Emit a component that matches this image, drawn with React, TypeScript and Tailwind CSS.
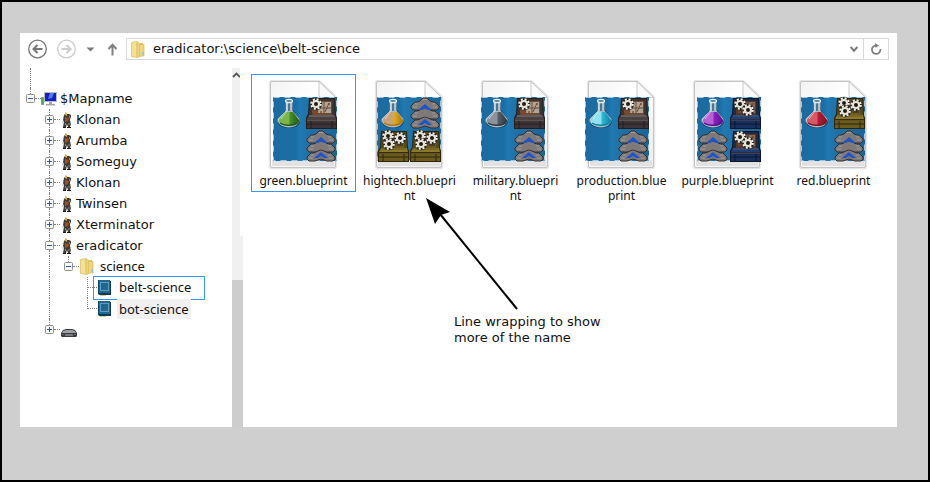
import type { ReactNode } from 'react';

type Machine = 'gray' | 'gold' | 'blue';
type Cell = 'belt' | Machine | null;

interface BlueprintFile {
  id: string;
  // name split at the points where it may wrap
  name: string[];
  flask: [string, string, string];
  // top right, bottom left, bottom right
  cells: [Cell, Cell, Cell];
  shift: number;
  selected?: boolean;
}

const files: BlueprintFile[] = [
  { id: 'green', name: ['green.blueprint'], flask: ['#7db648', '#468f28', '#245c18'], cells: ['gray', null, 'belt'], shift: 3, selected: true },
  { id: 'hightech', name: ['hightech.bluepri', 'nt'], flask: ['#c9a277', '#e0ae1d', '#a87410'], cells: ['belt', 'gold', 'gold'], shift: 1 },
  { id: 'military', name: ['military.bluepri', 'nt'], flask: ['#8b929c', '#56606a', '#30373f'], cells: ['gray', null, 'belt'], shift: -1 },
  { id: 'production', name: ['production.blue', 'print'], flask: ['#8fe2f0', '#2fb9d6', '#12809f'], cells: ['gray', null, 'belt'], shift: -3 },
  { id: 'purple', name: ['purple.blueprint'], flask: ['#b95fd8', '#8d1fc4', '#5c0f88'], cells: ['blue', 'belt', 'blue'], shift: 3 },
  { id: 'red', name: ['red.blueprint'], flask: ['#d95868', '#b81b34', '#7f1224'], cells: ['gold', null, 'belt'], shift: 1 },
];

const players = ['Klonan', 'Arumba', 'Someguy', 'Klonan', 'Twinsen', 'Xterminator'];

const machineColors = {
  gray: { rim: '#3d3431', top: '#6b4a38', plate: '#b0a594', side: '#4a4145', dark: '#241f20' },
  gold: { rim: '#5a4c12', top: '#6e5c1a', plate: '#4a3a26', side: '#8c7a26', dark: '#2e260c' },
  blue: { rim: '#1c2a45', top: '#4c3a30', plate: '#8a6a50', side: '#1e3f7c', dark: '#0e1628' },
};

function Gear({ x, y }: { x: number; y: number }) {
  return (
    <g transform={`translate(${x} ${y})`}>
      <circle r="4.8" fill="none" stroke="#2a2622" strokeWidth="3" />
      <circle r="4.8" fill="none" stroke="#f1efe6" strokeWidth="2" strokeDasharray="2 1.77" />
      <circle r="3" fill="none" stroke="#e6e3d8" strokeWidth="2.2" />
      <circle r="1.8" fill="#1d1a18" />
    </g>
  );
}

function MachineTile({ kind, x, y }: { kind: Machine; x: number; y: number }) {
  const c = machineColors[kind];
  return (
    <g transform={`translate(${x} ${y})`}>
      <path d="M3 1h26l1 17 1 3v11H0V21l2-4z" fill={c.dark} />
      <path d="M4 2h24l1 17H3z" fill={c.rim} />
      <path d="M6 4h20v14H6z" fill={c.top} />
      <path d="M13 5h12v11H12z" fill={c.plate} />
      <path d="M18 5v11M13 11h12M23 6l-4 9" stroke={c.top} />
      <path d="M8 15h3M14 15h2M22 7h2" stroke="#8f4a2a" strokeWidth="1.5" />
      <path d="M3 18h26l1 4H1z" fill={c.side} />
      <path d="M1 23h29v8H1z" fill={c.side} opacity=".65" />
      <path d="M3 19h25M1 23h29" stroke={c.plate} strokeWidth=".8" opacity=".7" />
      <path d="M1 27h29M5 24v7M26 24v7" stroke={c.dark} />
      {kind === 'gray' && <Gear x={10} y={7} />}
      {kind === 'gold' && (
        <>
          <Gear x={22} y={8} />
          <Gear x={10} y={6} />
          <Gear x={11} y={14} />
        </>
      )}
      {kind === 'blue' && (
        <>
          <Gear x={10} y={7} />
          <Gear x={18} y={13} />
        </>
      )}
    </g>
  );
}

function BeltTile({ x, y }: { x: number; y: number }) {
  return (
    <g transform={`translate(${x} ${y})`}>
      {[18, 9, 0].map((top) => (
        <g key={top} transform={`translate(0 ${top})`}>
          <path
            d="M13 1h4l3 3 3 1h2l4 4v2l-2 2h-6l-6-2-6 2H3l-2-2V9l4-4h2l3-1z"
            fill="#7f7a79"
            stroke="#353131"
          />
          <path d="M13 2.500h4M5 7h3M22 7h3M3 10h4M23 10h4" stroke="#a19c99" />
        </g>
      ))}
      <path d="M15 7l7 6h-4l-3-2-3 2H8zM15 22l7 6h-4l-3-2-3 2H8z" fill="#1f55cc" />
    </g>
  );
}

function Flask({ colors, id }: { colors: [string, string, string]; id: string }) {
  return (
    <g>
      <linearGradient id={id} x1="0" x2="1" y1="0" y2="0">
        <stop offset="0" stopColor={colors[0]} />
        <stop offset=".5" stopColor={colors[0]} />
        <stop offset=".55" stopColor={colors[1]} />
        <stop offset="1" stopColor={colors[2]} />
      </linearGradient>
      <path d="M12 3h7l1 11 7 9c1 5-5 8-11 8s-12-3-11-8l7-9z" fill="#123450" opacity=".75" />
      <path d="M13 4h6v10l7 8c1 5-5 8-10 8S4 27 5 22l8-8z" fill="#a9bcc5" stroke="#c9d9e0" strokeWidth=".7" />
      <path d="M12 15h8l6 8c1 4-5 6-10 6S5 27 6 23z" fill={`url(#${id})`} />
      <path d="M7 26c4 3 13 3 17 0" fill="none" stroke={colors[2]} strokeWidth="1.4" />
      <path d="M14 5v9l-6 8" fill="none" stroke="#fff" opacity=".5" />
      <path d="M15 5h2v9h-2z" fill="#52758b" />
      <ellipse cx="16" cy="4" rx="3.5" ry="1.7" fill="#5e8196" stroke="#e5eff3" strokeWidth="1.2" />
    </g>
  );
}

function BlueprintIcon({ file }: { file: BlueprintFile }) {
  const { id } = file;
  const spots = [[33, 0], [1, 33], [33, 33]];
  return (
    <svg width="75" height="90" viewBox="-4 -1 75 90" aria-hidden="true">
      <defs>
        <linearGradient id={`${id}-paper`} x1="0" x2="1" y1="0" y2="1">
          <stop offset="0" stopColor="#f3f3f3" />
          <stop offset=".4" stopColor="#ffffff" />
          <stop offset="1" stopColor="#ededed" />
        </linearGradient>
        <linearGradient id={`${id}-blue`} x1="0" x2="1" y1="0" y2="0">
          <stop offset="0" stopColor="#1b6ba1" />
          <stop offset=".36" stopColor="#1a6ea5" />
          <stop offset=".42" stopColor="#217ab2" />
          <stop offset=".55" stopColor="#1d72a9" />
          <stop offset="1" stopColor="#1a6599" />
        </linearGradient>
      </defs>
      <path d="M0 2q0-2 2-2h47l17 16v69q0 2-2 2H2q-2 0-2-2z" fill="none" stroke="#e6e6e6" strokeWidth="2.4" />
      <path d="M.5 2Q.5.5 2 .5h47l16.500 16V85q0 1.500-1.500 1.500H2Q.5 86.500.5 85z" fill={`url(#${id}-paper)`} stroke="#c4c4c4" />
      <path d="M2 82h62" stroke="#e2e2e2" strokeWidth="6" />
      <path d="M49 1l16 16-16-3z" fill="#cfcfcf" />
      <path d="M49 .5v14q0 2 2 2h14.500z" fill="#fafafa" stroke="#bdbdbd" strokeWidth=".8" />
      <g transform={`translate(${file.shift} 16)`}>
        <rect width="64" height="64" fill={`url(#${id}-blue)`} />
        <rect x=".5" y=".5" width="63" height="63" fill="none" stroke="#a5c6dc" strokeDasharray="6 5" />
        <Flask colors={file.flask} id={`${id}-flask`} />
        {file.cells.map((cell, i) => {
          const [x, y] = spots[i];
          if (cell === null) return null;
          if (cell === 'belt') return <BeltTile key={i} x={x} y={y} />;
          return <MachineTile key={i} kind={cell} x={x} y={y} />;
        })}
      </g>
    </svg>
  );
}

function FolderIcon() {
  return (
    <svg width="14" height="17" viewBox="0 0 14 17" className="shrink-0" aria-hidden="true">
      <path d="M4 2.500l8-.5v13l-8 1z" fill="#e3c258" />
      <path d="M8 3.500h5V15H8z" fill="#f0d67c" stroke="#d2b04a" strokeWidth=".6" />
      <path d="M.5 1.500L6 .5 8 2v14l-2 .5-5.500-1z" fill="#f5e196" stroke="#d9ba58" strokeWidth=".7" />
      <path d="M6 1v15" stroke="#d8b94f" />
      <path d="M12 11v3" stroke="#7fc4e8" strokeWidth="1.4" />
    </svg>
  );
}

function ComputerIcon() {
  return (
    <svg width="16" height="14" viewBox="0 0 16 14" className="shrink-0" aria-hidden="true">
      <path d="M0 5h3v8H0z" fill="#9a9e9a" />
      <path d="M.5 6h2v6h-2z" fill="#49b04a" />
      <path d="M3 0h13v10H3z" fill="#b9bcc4" />
      <path d="M4 1h11v8H4z" fill="#1420c4" />
      <path d="M9 1h4l-2 5-4 1z" fill="#4f7cf5" />
      <path d="M8 10h3v2h3v1.500H5V12h3z" fill="#a6a6a6" />
    </svg>
  );
}

function PlayerIcon() {
  return (
    <svg width="11" height="16" viewBox="0 0 11 16" className="shrink-0" aria-hidden="true">
      <path d="M4 2h4l2 1v2L9 7v3l1 2-1 3H7l-1-3-1 3H2l1-5-1-2 1-5z" fill="#3f3b39" />
      <path d="M4 5l4 1-1 3-3 1z" fill="#a0501c" />
      <path d="M4 0l2 1v3L4 3z" fill="#e8a83a" />
      <path d="M8.500 4v2M2.500 5v2M4.500 11v2M8 11v2" stroke="#8d8883" />
      <path d="M2 15.500h3M6 15.500h4" stroke="#1c1a19" />
      <path d="M9.500 9v2M2 9v2" stroke="#b5afa8" />
    </svg>
  );
}

function BookIcon() {
  return (
    <svg width="14" height="16" viewBox="0 0 14 16" className="shrink-0" aria-hidden="true">
      <path d="M1 1h13v14H2.500L1 14z" fill="#123a54" />
      <path d="M1 0h12v13H1z" fill="#1c6a94" />
      <path d="M3.500 2.500h8v8h-8z" fill="none" stroke="#a5cfe2" strokeDasharray="1 1" />
      <path d="M1.500 0v14" stroke="#0f4566" />
      <path d="M3 15.500h6" stroke="#d3c98c" />
    </svg>
  );
}

function HelmetIcon() {
  return (
    <svg width="16" height="9" viewBox="0 0 16 9" className="mt-2 shrink-0" aria-hidden="true">
      <path d="M0 4l2-3 3-1h6l3 1 2 3v3l-1 1H1L0 7z" fill="#3b3c3f" />
      <path d="M2 2l3-1h6l3 1 1 2H1z" fill="#9b9da0" />
      <path d="M4 6q0-1 1-1h6q1 0 1 1v1H4z" fill="#77797c" />
      <path d="M1 5.500h2M13 5.500h2" stroke="#5d5f63" />
    </svg>
  );
}

function Toggle({ open, above = true, below = true, label }: { open?: boolean; above?: boolean; below?: boolean; label: string }) {
  return (
    <div className="flex w-[9px] flex-col items-center self-stretch">
      <div className={above ? 'w-px flex-1 border-l border-dotted border-[#808080]' : 'flex-1'} />
      <button type="button" aria-label={label} aria-expanded={!!open} className="block size-[9px]">
        <svg width="9" height="9" viewBox="0 0 9 9">
          <rect x=".5" y=".5" width="8" height="8" rx="1" fill="#f6f6f6" stroke="#8f8f8f" />
          <path d={open ? 'M2 4.500h5' : 'M2 4.500h5M4.500 2v5'} stroke="#35569c" />
        </svg>
      </button>
      <div className={below ? 'w-px flex-1 border-l border-dotted border-[#808080]' : 'flex-1'} />
    </div>
  );
}

// Empty indent column, optionally with the parent's guide line running through it
function Rail({ line }: { line?: boolean }) {
  return (
    <div className="flex w-[19px] self-stretch pl-1">
      {line && <div className="border-l border-dotted border-[#808080]" />}
    </div>
  );
}

function Dash() {
  return <div className="mr-px w-1.5 border-t border-dotted border-[#808080]" />;
}

function Row({ children }: { children: ReactNode }) {
  return <li className="flex h-[21px] items-center whitespace-nowrap">{children}</li>;
}

function Tree() {
  return (
    <nav aria-label="Blueprint folders" className="w-[212px] shrink-0 pl-1.5 text-[13px]">
      <div className="ml-1 h-5 border-l border-dotted border-[#808080]" />
      <ul>
        <Row>
          <Toggle open below={false} label="Collapse $Mapname" />
          <div className="w-1.5 border-t border-dotted border-[#808080]" />
          <ComputerIcon />
          <a href="#map" className="ml-[3px]">$Mapname</a>
        </Row>
        {players.map((name, i) => (
          <Row key={i}>
            <Rail />
            <Toggle label={`Expand ${name}`} />
            <Dash />
            <PlayerIcon />
            <a href="#player" className="ml-1">{name}</a>
          </Row>
        ))}
        <Row>
          <Rail />
          <Toggle open label="Collapse eradicator" />
          <Dash />
          <PlayerIcon />
          <a href="#eradicator" className="ml-1">eradicator</a>
        </Row>
        <Row>
          <Rail />
          <Rail line />
          <Toggle open below={false} label="Collapse science" />
          <Dash />
          <FolderIcon />
          <a href="#science" className="ml-1.5 font-['Noto_Sans',sans-serif]">science</a>
        </Row>
        <Row>
          <Rail />
          <Rail line />
          <Rail />
          <div className="ml-1 w-1.5 self-stretch border-l border-dotted border-[#808080]">
            <div className="mt-2.5 border-t border-dotted border-[#808080]" />
          </div>
          <a href="#belt-science" aria-current="page" className="-my-1 flex h-6 w-28 items-center border border-[#3a96f5] font-['Noto_Sans',sans-serif]">
            <span className="w-[3px] border-t border-dotted border-[#808080]" />
            <BookIcon />
            <span className="ml-2">belt-science</span>
          </a>
        </Row>
        <Row>
          <Rail />
          <Rail line />
          <Rail />
          <div className="ml-1 h-[11px] w-2.5 self-start border-b border-l border-dotted border-[#808080]" />
          <a href="#bot-science" className="flex items-center font-['Noto_Sans',sans-serif]">
            <BookIcon />
            <span className="ml-1.5 bg-[#f0f0f0] px-0.5 leading-5">bot-science</span>
          </a>
        </Row>
        <Row>
          <Rail />
          <Toggle below={false} label="Expand unnamed player" />
          <Dash />
          <HelmetIcon />
        </Row>
      </ul>
    </nav>
  );
}

function Toolbar() {
  return (
    <header className="flex items-center pt-[5px] pr-2 pb-2 pl-2">
      <button type="button" aria-label="Back">
        <svg width="20" height="20" viewBox="0 0 20 20" fill="none" stroke="#757575">
          <circle cx="9.5" cy="10" r="8.8" strokeWidth="1.3" />
          <path d="M14.500 10H6M9.500 6l-4 4 4 4" strokeWidth="2" />
        </svg>
      </button>
      <button type="button" aria-label="Forward" className="ml-[9px]">
        <svg width="20" height="20" viewBox="0 0 20 20" fill="none" stroke="#cbcbcb">
          <circle cx="9.5" cy="10" r="8.8" strokeWidth="1.3" />
          <path d="M4.500 10H13M9.500 6l4 4-4 4" strokeWidth="2" />
        </svg>
      </button>
      <button type="button" aria-label="Recent locations" className="ml-[9px]">
        <svg width="9" height="5" viewBox="0 0 9 5">
          <path d="M.5.5h8l-4 4z" fill="#7a7a7a" />
        </svg>
      </button>
      <button type="button" aria-label="Up" className="mr-2 ml-3">
        <svg width="11" height="13" viewBox="0 0 11 13" fill="none" stroke="#808080" strokeWidth="2">
          <path d="M5.500 12.500V2M1.500 6l4-4.300 4 4.300" />
        </svg>
      </button>
      <div className="flex h-[22px] min-w-0 flex-1 items-center border border-[#d9d9d9] pl-1">
        <FolderIcon />
        <input
          aria-label="Address"
          defaultValue="eradicator:\science\belt-science"
          className="ml-2 min-w-0 flex-1 text-[13px] outline-none"
        />
        <button type="button" aria-label="Previous locations" className="px-[5px]">
          <svg width="8" height="7" viewBox="0 0 8 7" fill="none" stroke="#777" strokeWidth="2">
            <path d="M.7 1L4 4.800 7.300 1" />
          </svg>
        </button>
        <button type="button" aria-label="Refresh" className="flex w-[25px] justify-center self-stretch border-l border-[#d9d9d9] pt-1">
          <svg width="12" height="12" viewBox="0 0 12 12" fill="none">
            <path d="M6 2.500a4.200 4.200 0 1 0 4.300 3.500" stroke="#808080" strokeWidth="1.8" />
            <path d="M5 0l4 2.500L5.500 5z" fill="#808080" />
          </svg>
        </button>
      </div>
    </header>
  );
}

function ScrollBar() {
  return (
    <div className="flex w-[11px] shrink-0 flex-col">
      <button type="button" aria-label="Scroll up" className="flex h-[168px] w-2 justify-center bg-[#f0f0f0] pt-1">
        <svg width="8" height="6" viewBox="0 0 8 6" fill="none" stroke="#555" strokeWidth="1.8">
          <path d="M1 5l3.500-3.500L8 5" />
        </svg>
      </button>
      <div className="h-11 bg-[#f0f0f0]" />
      <div className="flex-1 bg-[#cdcdcd]" />
    </div>
  );
}

function FileTile({ file }: { file: BlueprintFile }) {
  return (
    <li>
      <button
        type="button"
        className={`flex w-full flex-col items-center border px-1 pt-[5px] pb-[3px] ${file.selected ? 'border-[#3a96f5]' : 'border-transparent'}`}
      >
        <BlueprintIcon file={file} />
        <span className="mt-[3px] w-full text-center font-['Noto_Sans',sans-serif] text-[12px] leading-[15px]">
          {file.name.join('\u200b')}
        </span>
      </button>
    </li>
  );
}

export default function App() {
  return (
    <div className="min-h-screen border-2 border-black bg-[#cfcfcf] pt-[31px] pr-[31px] pb-[53px] pl-[18px] font-['DejaVu_Sans',sans-serif] text-[#111]">
      <div className="bg-white">
        <Toolbar />
        <main className="flex min-h-[359px]">
          <Tree />
          <ScrollBar />
          <section aria-label="Files" className="relative min-w-0 flex-1 pt-1.5 pl-2">
            <ul className="grid grid-cols-[repeat(auto-fill,105px)] gap-x-px">
              {files.map((file) => (
                <FileTile key={file.id} file={file} />
              ))}
            </ul>
            <div className="absolute top-[130px] left-[183px]">
              <svg width="94" height="114" viewBox="0 0 94 114" aria-hidden="true">
                <path d="M14 16L91 111" stroke="#000" strokeWidth="2" />
                <path d="M0 0l24 14-9 3-6 9z" fill="#000" />
              </svg>
              <p className="mt-0.5 ml-7 text-[13px] leading-4 whitespace-nowrap">
                Line wrapping to show
                <br />
                more of the name
              </p>
            </div>
          </section>
        </main>
      </div>
    </div>
  );
}
